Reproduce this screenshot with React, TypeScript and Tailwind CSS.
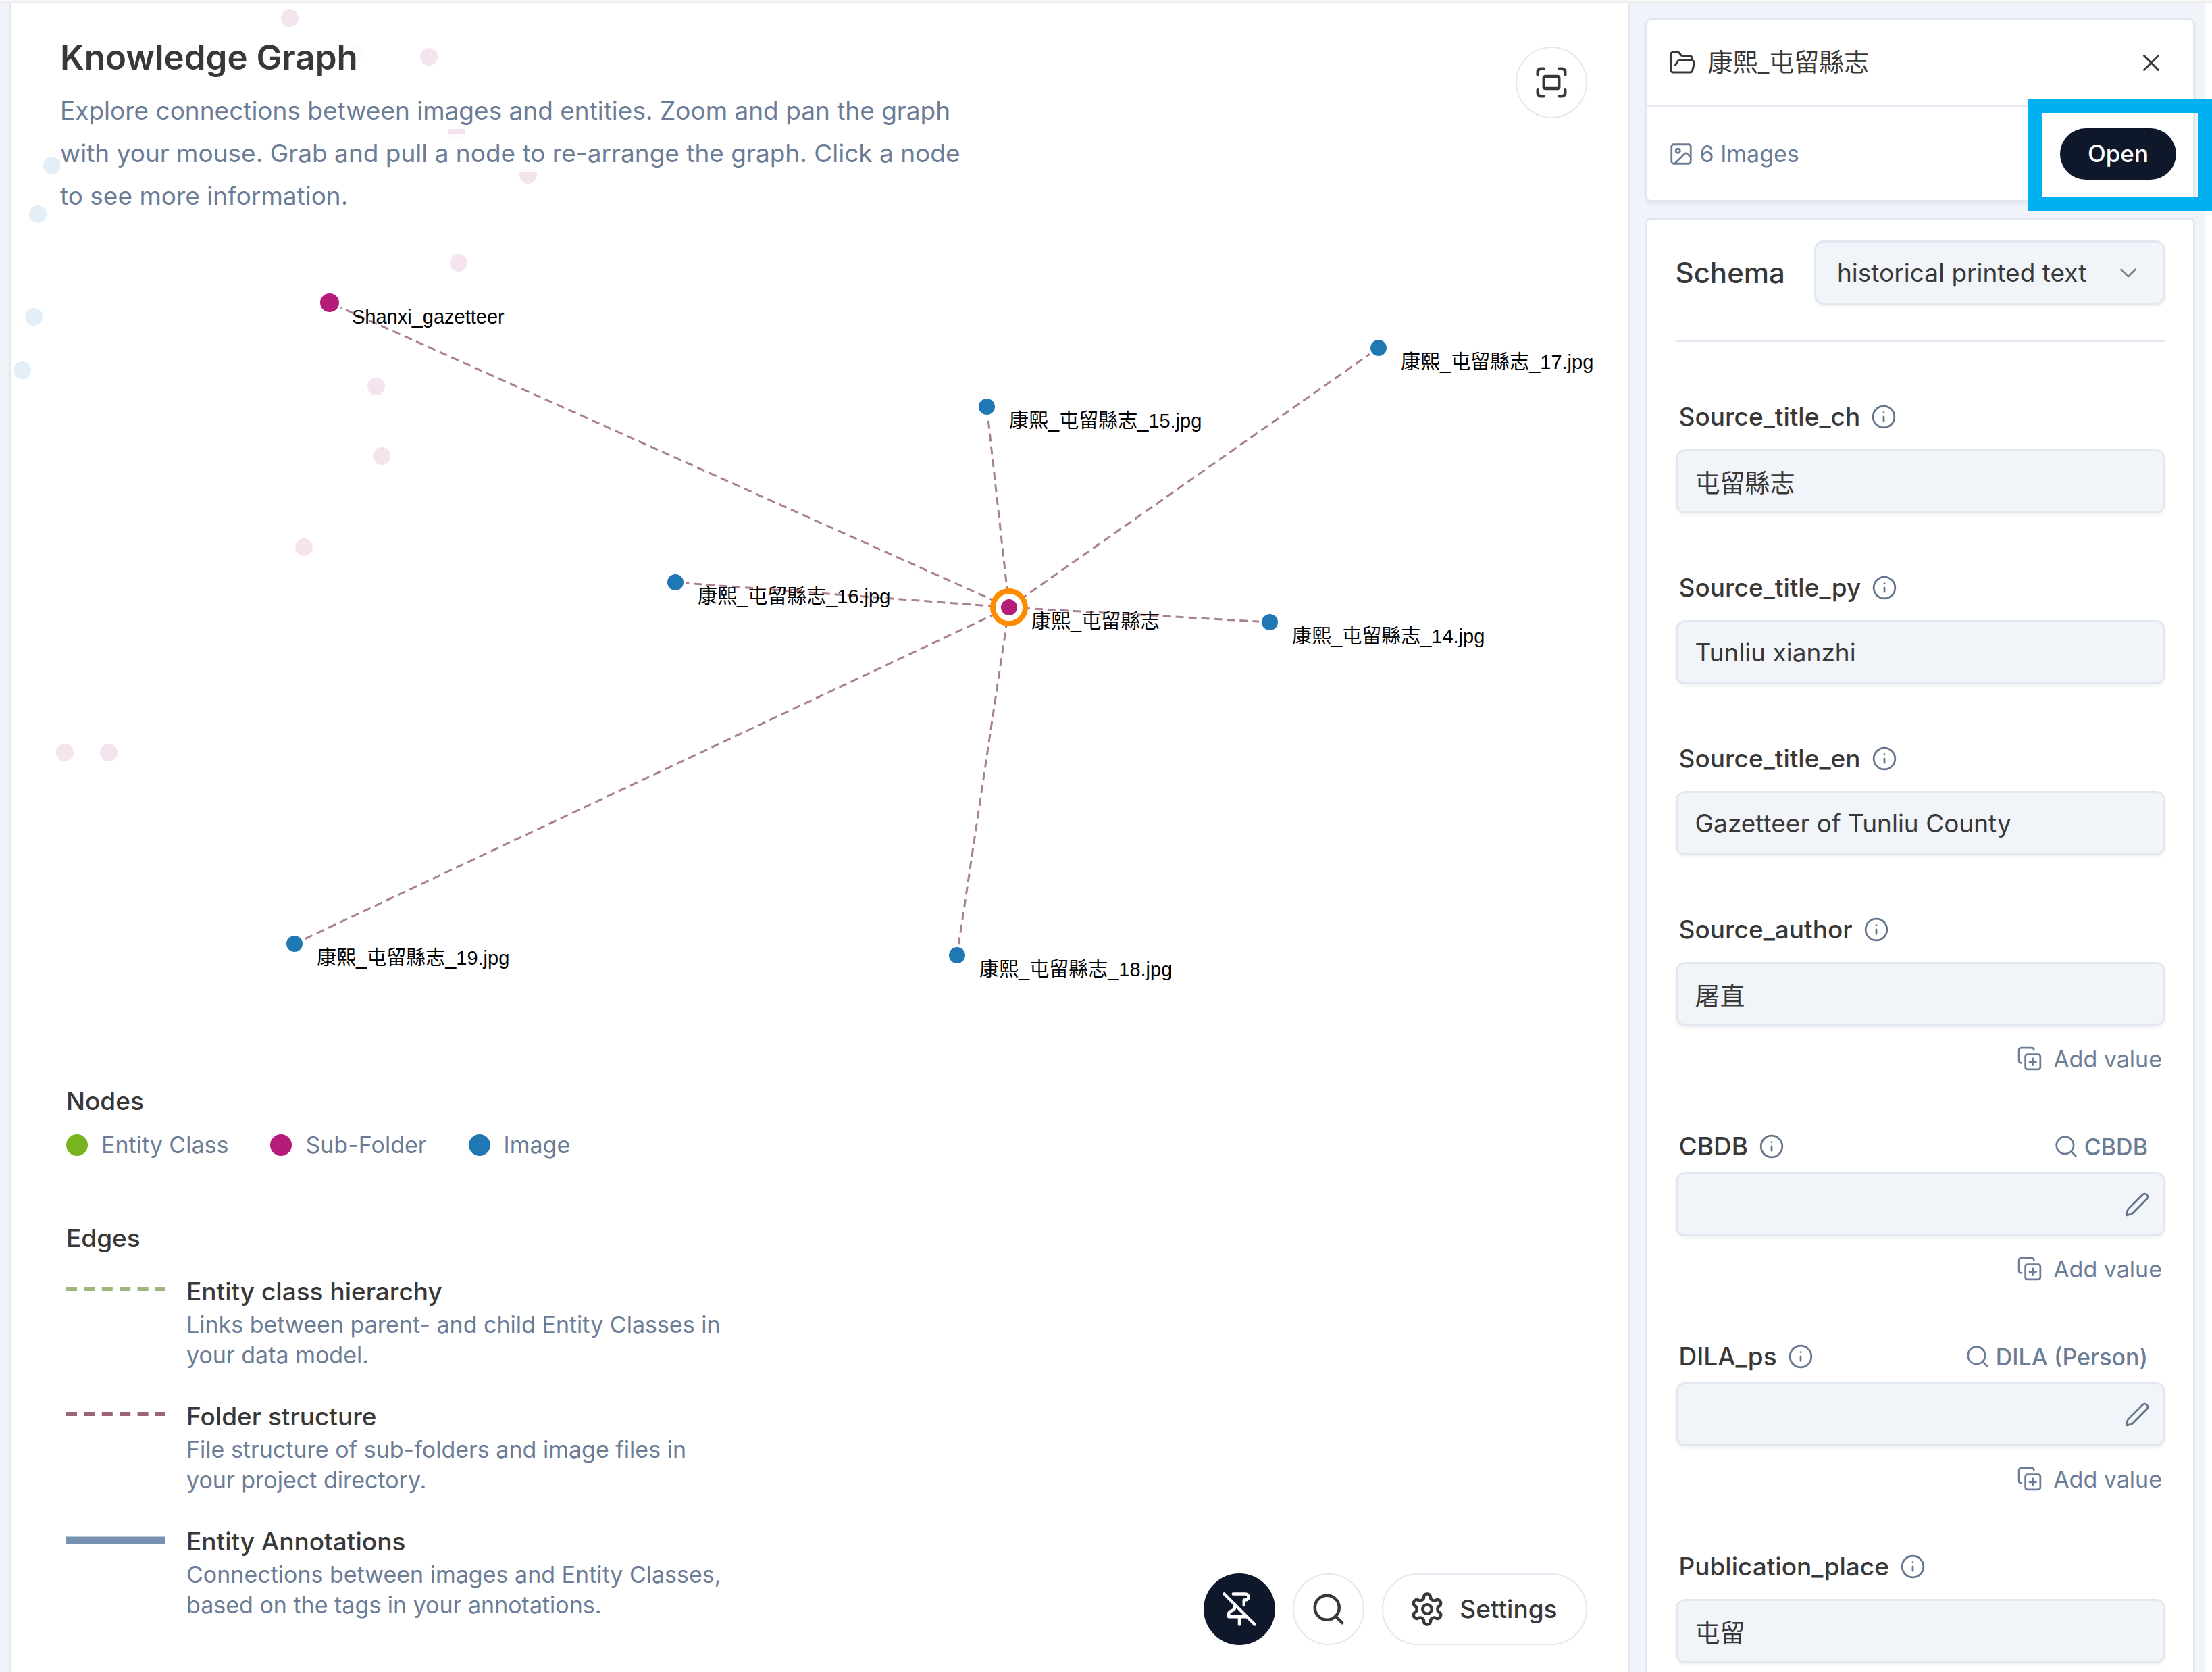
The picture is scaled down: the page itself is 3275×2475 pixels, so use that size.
import { useId } from "react";
import {
  ChevronDown,
  CopyPlus,
  FolderOpen,
  Fullscreen,
  Image as ImageIcon,
  Info,
  Pen,
  Search,
  X,
} from "lucide-react";

const PINK = "#b51c79";
const BLUE = "#1f77b4";
const EDGE = "#a98092";

type Point = { x: number; y: number };

const center: Point = { x: 1477, y: 894 };

const nodes: { label: string; x: number; y: number; color: string; r: number }[] = [
  { label: "Shanxi_gazetteer", x: 471, y: 443, color: PINK, r: 14 },
  { label: "康熙_屯留縣志_17.jpg", x: 2024, y: 510, color: BLUE, r: 12 },
  { label: "康熙_屯留縣志_15.jpg", x: 1444, y: 597, color: BLUE, r: 12 },
  { label: "康熙_屯留縣志_14.jpg", x: 1863, y: 916, color: BLUE, r: 12 },
  { label: "康熙_屯留縣志_16.jpg", x: 983, y: 857, color: BLUE, r: 12 },
  { label: "康熙_屯留縣志_18.jpg", x: 1400, y: 1409, color: BLUE, r: 12 },
  { label: "康熙_屯留縣志_19.jpg", x: 419, y: 1392, color: BLUE, r: 12 },
];

const faintPink: Point[] = [
  { x: 412, y: 22 },
  { x: 618, y: 79 },
  { x: 509, y: 74 },
  { x: 659, y: 192 },
  { x: 495, y: 227 },
  { x: 765, y: 254 },
  { x: 662, y: 384 },
  { x: 540, y: 567 },
  { x: 548, y: 670 },
  { x: 433, y: 805 },
  { x: 79, y: 1109 },
  { x: 144, y: 1109 },
];

const faintBlue: Point[] = [
  { x: 60, y: 240 },
  { x: 39, y: 312 },
  { x: 33, y: 464 },
  { x: 16, y: 543 },
];

function Graph() {
  return (
    <svg
      className="absolute inset-0 h-full w-full"
      role="img"
      aria-label="Graph of folders and images"
      lang="zh-Hant"
    >
      {faintPink.map((p) => (
        <circle key={`${p.x}-${p.y}`} cx={p.x} cy={p.y} r={13} fill="#f5e3ee" />
      ))}
      {faintBlue.map((p) => (
        <circle key={`${p.x}-${p.y}`} cx={p.x} cy={p.y} r={13} fill="#e3eef6" />
      ))}
      {nodes.map((n) => (
        <line
          key={n.label}
          x1={center.x}
          y1={center.y}
          x2={n.x}
          y2={n.y}
          stroke={EDGE}
          strokeWidth={3}
          strokeDasharray="12 7"
        />
      ))}
      {nodes.map((n) => (
        <g key={n.label}>
          <circle cx={n.x} cy={n.y} r={n.r + 4} fill="#fff" />
          <circle cx={n.x} cy={n.y} r={n.r} fill={n.color} />
          <text
            x={n.x + 33}
            y={n.y + 31}
            fill="#000"
            className="font-['Liberation_Sans','Noto_Sans_CJK_TC',sans-serif] text-[29px]"
          >
            {n.label}
          </text>
        </g>
      ))}
      <circle cx={center.x} cy={center.y} r={24} fill="#fff" stroke="#ff8c00" strokeWidth={8} />
      <circle cx={center.x} cy={center.y} r={12} fill={PINK} />
      <text
        x={center.x + 33}
        y={center.y + 31}
        fill="#000"
        className="font-['Liberation_Sans','Noto_Sans_CJK_TC',sans-serif] text-[29px]"
      >
        康熙_屯留縣志
      </text>
    </svg>
  );
}

const iconProps = {
  fill: "none",
  stroke: "currentColor",
  strokeWidth: 2,
  strokeLinecap: "round",
  strokeLinejoin: "round",
  viewBox: "0 0 24 24",
  "aria-hidden": true,
} as const;

function PinOffIcon() {
  return (
    <svg {...iconProps} className="size-[54px]">
      <path d="M2 2 22 22" />
      <path d="M12 17v5" />
      <path d="M9 9v1.76a2 2 0 0 1-1.11 1.79l-1.78.9A2 2 0 0 0 5 15.24V17h12" />
      <path d="M15 9.34V6h1a2 2 0 0 0 0-4H7.89" />
    </svg>
  );
}

function GearIcon() {
  return (
    <svg {...iconProps} className="size-[54px]">
      <path d="M12.22 2h-.44a2 2 0 0 0-2 2v.18a2 2 0 0 1-1 1.73l-.43.25a2 2 0 0 1-2 0l-.15-.08a2 2 0 0 0-2.73.73l-.22.38a2 2 0 0 0 .73 2.73l.15.1a2 2 0 0 1 1 1.72v.51a2 2 0 0 1-1 1.74l-.15.09a2 2 0 0 0-.73 2.73l.22.38a2 2 0 0 0 2.73.73l.15-.08a2 2 0 0 1 2 0l.43.25a2 2 0 0 1 1 1.73V20a2 2 0 0 0 2 2h.44a2 2 0 0 0 2-2v-.18a2 2 0 0 1 1-1.73l.43-.25a2 2 0 0 1 2 0l.15.08a2 2 0 0 0 2.73-.73l.22-.39a2 2 0 0 0-.73-2.73l-.15-.08a2 2 0 0 1-1-1.74v-.5a2 2 0 0 1 1-1.74l.15-.09a2 2 0 0 0 .73-2.73l-.22-.38a2 2 0 0 0-2.73-.73l-.15.08a2 2 0 0 1-2 0l-.43-.25a2 2 0 0 1-1-1.73V4a2 2 0 0 0-2-2z" />
      <circle cx="12" cy="12" r="3" />
    </svg>
  );
}

const legendNodes = [
  { label: "Entity Class", dot: "bg-[#78b41e]" },
  { label: "Sub-Folder", dot: "bg-[#b51c79]" },
  { label: "Image", dot: "bg-[#1f77b4]" },
];

const legendEdges = [
  {
    title: "Entity class hierarchy",
    text: "Links between parent- and child Entity Classes in your data model.",
    color: "#9fb57c",
    dash: "16 10.4",
    width: 6,
    y: 6,
  },
  {
    title: "Folder structure",
    text: "File structure of sub-folders and image files in your project directory.",
    color: "#9b6479",
    dash: "16 10.4",
    width: 6,
    y: 6,
  },
  {
    title: "Entity Annotations",
    text: "Connections between images and Entity Classes, based on the tags in your annotations.",
    color: "#7590b0",
    dash: undefined,
    width: 11,
    y: 8,
  },
];

function Legend() {
  return (
    <div className="mb-[37px]">
      <h2 className="text-[37px] leading-[48px] font-medium">Nodes</h2>
      <ul className="mt-[17px] flex gap-[62px]">
        {legendNodes.map((n) => (
          <li
            key={n.label}
            className="flex items-center gap-[20px] text-[34px] leading-[48px] text-[#6b7c96]"
          >
            <span className={`size-[32px] rounded-full ${n.dot}`} />
            {n.label}
          </li>
        ))}
      </ul>
      <h2 className="mt-[90px] text-[37px] leading-[48px] font-medium">Edges</h2>
      <ul className="mt-[31px] flex flex-col gap-[45px]">
        {legendEdges.map((e) => (
          <li key={e.title} className="flex gap-[31px]">
            <svg className="mt-[14px] h-[14px] w-[147px] shrink-0" aria-hidden="true">
              <line
                x1="0"
                y1={e.y}
                x2="147"
                y2={e.y}
                stroke={e.color}
                strokeWidth={e.width}
                strokeDasharray={e.dash}
              />
            </svg>
            <div className="max-w-[800px]">
              <h3 className="text-[37px] leading-[48px] font-medium">{e.title}</h3>
              <p className="mt-[2px] text-[34px] leading-[45px] text-[#6b7c96]">{e.text}</p>
            </div>
          </li>
        ))}
      </ul>
    </div>
  );
}

function GraphPanel() {
  return (
    <main className="relative min-w-0 flex-1 border-x-[3px] border-[#e2e8f0] bg-white">
      <Graph />
      <div className="relative flex h-full flex-col justify-between">
        <header className="flex items-start justify-between pt-[44px] pr-[60px] pl-[72px]">
          <div className="max-w-[1360px]">
            <h1 className="text-[51px] leading-[72px] font-semibold">
              <span className="rounded-lg bg-white/85 pr-5">Knowledge Graph</span>
            </h1>
            <p className="mt-[11px] text-[37px] leading-[63px] text-[#6b7c96]">
              <span className="rounded-lg bg-white/85 box-decoration-clone py-[5px]">
                Explore connections between images and entities. Zoom and pan the graph with your
                mouse. Grab and pull a node to re-arrange the graph. Click a node to see more
                information.
              </span>
            </p>
          </div>
          <button
            type="button"
            aria-label="Fit graph to screen"
            className="mt-[20px] flex size-[106px] items-center justify-center rounded-full border-2 border-[#e2e8f0] bg-white"
          >
            <Fullscreen className="size-[54px]" strokeWidth={2} />
          </button>
        </header>
        <footer className="flex items-end justify-between pr-[60px] pb-[40px] pl-[81px]">
          <Legend />
          <div className="flex gap-[26px]">
            <button
              type="button"
              aria-label="Unpin nodes"
              className="flex size-[106px] items-center justify-center rounded-full bg-[#0f172a] text-white"
            >
              <PinOffIcon />
            </button>
            <button
              type="button"
              aria-label="Search"
              className="flex size-[106px] items-center justify-center rounded-full border-2 border-[#e2e8f0] bg-white"
            >
              <Search className="size-[54px]" strokeWidth={2} />
            </button>
            <button
              type="button"
              className="flex h-[106px] items-center gap-[21px] rounded-full border-2 border-[#e2e8f0] bg-white pr-[42px] pl-[38px] text-[37px] font-medium"
            >
              <GearIcon />
              Settings
            </button>
          </div>
        </footer>
      </div>
    </main>
  );
}

type FieldData = { label: string; value: string; search?: string; multiple?: boolean };

const fields: FieldData[] = [
  { label: "Source_title_ch", value: "屯留縣志" },
  { label: "Source_title_py", value: "Tunliu xianzhi" },
  { label: "Source_title_en", value: "Gazetteer of Tunliu County" },
  { label: "Source_author", value: "屠直", multiple: true },
  { label: "CBDB", value: "", search: "CBDB", multiple: true },
  { label: "DILA_ps", value: "", search: "DILA (Person)", multiple: true },
  { label: "Publication_place", value: "屯留" },
];

function Field({ label, value, search, multiple }: FieldData) {
  const id = useId();
  return (
    <div>
      <div className="flex h-[48px] items-center justify-between pr-[26px] pl-[5px]">
        <span className="flex items-center gap-[16px]">
          <label htmlFor={id} className="text-[37px] leading-[48px] font-medium">
            {label}
          </label>
          <Info className="size-[38px] text-[#64748b]" strokeWidth={1.75} />
        </span>
        {search && (
          <button
            type="button"
            className="flex items-center gap-[8px] text-[34px] font-medium text-[#6b7c96]"
          >
            <Search className="size-[38px]" strokeWidth={1.75} />
            {search}
          </button>
        )}
      </div>
      <div className={search ? "relative mt-[14px]" : "relative mt-[24px]"}>
        <input
          id={id}
          lang="zh-Hant"
          defaultValue={value}
          className="block h-[95px] w-full rounded-[14px] border-[3px] border-[#e2e8f0] bg-[#f1f4f9] px-[26px] text-[37px] shadow-[0_3px_4px_rgba(0,0,0,0.05)]"
        />
        {search && (
          <button
            type="button"
            aria-label={`Edit ${label}`}
            className="absolute inset-y-0 right-[23px] text-[#64748b]"
          >
            <Pen className="size-[38px]" strokeWidth={1.75} />
          </button>
        )}
      </div>
      {multiple && (
        <div className="mt-[28px] flex justify-end pr-[5px]">
          <button
            type="button"
            className="flex h-[40px] items-center gap-[16px] text-[34px] text-[#6b7c96]"
          >
            <CopyPlus className="size-[38px]" strokeWidth={1.75} />
            Add value
          </button>
        </div>
      )}
    </div>
  );
}

function Sidebar() {
  return (
    <aside className="flex w-[26.2%] shrink-0 flex-col gap-[23px] pt-[22px] pr-[14px] pl-[23px]">
      <section className="rounded-lg border-[3px] border-[#e2e8f0] bg-white shadow-[0_3px_4px_rgba(0,0,0,0.06)]">
        <div className="flex h-[126px] items-center pr-[41px] pl-[31px]">
          <FolderOpen className="size-[42px]" strokeWidth={1.75} />
          <h2 lang="zh-Hant" className="ml-[17px] flex-1 text-[37px] leading-[48px]">
            康熙_屯留縣志
          </h2>
          <button type="button" aria-label="Close">
            <X className="size-[42px]" strokeWidth={1.75} />
          </button>
        </div>
        <div className="flex h-[140px] items-center border-t-[3px] border-[#e2e8f0] pr-[25px] pl-[31px] text-[34px] text-[#6b7c96]">
          <ImageIcon className="size-[38px]" strokeWidth={1.75} />
          <span className="ml-[9px] flex-1">6 Images</span>
          <div className="relative">
            <button
              type="button"
              className="block h-[76px] rounded-full bg-[#0f172a] px-[41px] text-[35px] font-medium text-white"
            >
              Open
            </button>
            <div className="pointer-events-none absolute -top-[44px] -right-[53px] -bottom-[47px] -left-[48px] border-[21px] border-[#00b0f0]" />
          </div>
        </div>
      </section>

      <section className="flex-1 rounded-t-lg border-x-[3px] border-t-[3px] border-[#e2e8f0] bg-white pr-[41px] pb-[8px] pl-[42px]">
        <div className="mt-[31px] flex items-center gap-[43px]">
          <label htmlFor="schema" className="text-[42px] leading-[56px] font-medium">
            Schema
          </label>
          <div className="relative flex-1">
            <select
              id="schema"
              className="block h-[95px] w-full appearance-none rounded-[14px] border-[3px] border-[#e2e8f0] bg-[#f1f4f9] px-[31px] text-[37px] shadow-[0_3px_4px_rgba(0,0,0,0.05)]"
            >
              <option>historical printed text</option>
            </select>
            <ChevronDown
              className="pointer-events-none absolute inset-y-0 right-[34px] my-auto size-[42px] text-[#808080]"
              strokeWidth={1.5}
            />
          </div>
        </div>
        <hr className="mt-[52px] border-t-[3px] border-[#e2e8f0]" />
        <div className="mt-[87px] flex flex-col gap-[86px]">
          {fields.map((f) => (
            <Field key={f.label} {...f} />
          ))}
        </div>
      </section>
    </aside>
  );
}

export default function App() {
  return (
    <div className="flex min-h-screen flex-col bg-[#f0f3f9] font-['Inter','Noto_Sans_CJK_TC',sans-serif] text-[#383838]">
      <div className="h-[5px] border-b-2 border-[#e8e8e8] bg-[#f5f5f5]" />
      <div className="flex flex-1 border-r-[11px] border-white pl-[14px]">
        <GraphPanel />
        <Sidebar />
      </div>
    </div>
  );
}
